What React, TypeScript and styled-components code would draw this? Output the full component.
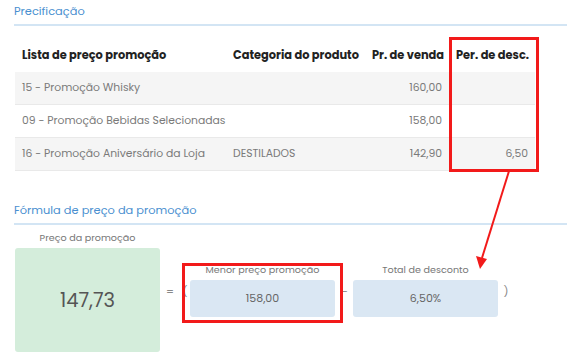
import styled, { createGlobalStyle } from 'styled-components'

const GlobalStyle = createGlobalStyle`
  html, body {
    margin: 0;
    padding: 0;
    background: #fff;
  }
  body {
    font-family: 'Poppins', 'Open Sans', 'Liberation Sans', sans-serif;
  }
`

const Page = styled.div`
  position: relative;
  width: 567px;
  height: 364px;
  overflow: hidden;
  padding-left: 14px;
  box-sizing: border-box;
`

const SectionTitle = styled.div<{ $top: number }>`
  margin-top: ${(p) => p.$top}px;
  font-size: 11.4px;
  line-height: 18px;
  color: #4a8fd0;
  padding-bottom: 4px;
  border-bottom: 2px solid #d3e5f4;
`

const Table = styled.div`
  margin-top: 12px;
  margin-left: 1px;
  width: 520px;
`

const Row = styled.div<{ $striped?: boolean; $head?: boolean }>`
  display: grid;
  grid-template-columns: 211px 139px 84px 86px;
  height: ${(p) => (p.$head ? 34 : 32)}px;
  align-items: center;
  background: ${(p) => (p.$striped ? '#f5f5f5' : '#fff')};
  border-bottom: ${(p) => (p.$head ? 'none' : '1px solid #e9e9e9')};
  font-size: ${(p) => (p.$head ? '11.4px' : '10.8px')};
  font-weight: ${(p) => (p.$head ? 700 : 400)};
  color: ${(p) => (p.$head ? '#222' : '#7a7a7a')};
`

const Cell = styled.div<{ $right?: boolean }>`
  padding: 0 7px;
  text-align: ${(p) => (p.$right ? 'right' : 'left')};
  white-space: nowrap;
`

const Formula = styled.div`
  display: flex;
  align-items: flex-start;
  margin-top: 6px;
  margin-left: 1px;
`

const Block = styled.div`
  display: flex;
  flex-direction: column;
  align-items: center;
`

const Label = styled.div`
  font-size: 9.6px;
  line-height: 14px;
  color: #777;
  margin-bottom: 3px;
`

const ResultBox = styled.div`
  width: 145px;
  height: 104px;
  background: #d4eddb;
  border-radius: 3px;
  display: flex;
  align-items: center;
  justify-content: center;
  font-size: 19.5px;
  color: #555;
`

const Operator = styled.div<{ $w: number }>`
  width: ${(p) => p.$w}px;
  margin-top: 53px;
  font-size: 11px;
  color: #888;
  text-align: center;
  line-height: 14px;
`

const TermGroup = styled.div`
  display: flex;
  flex-direction: column;
  align-items: center;
  margin-top: 32px;
`

const TermBox = styled.div`
  width: 145px;
  height: 37px;
  background: #dae7f3;
  border-radius: 3px;
  display: flex;
  align-items: center;
  justify-content: center;
  font-size: 11px;
  color: #666;
`

const Highlight = styled.div<{ $x: number; $y: number; $w: number; $h: number }>`
  position: absolute;
  left: ${(p) => p.$x}px;
  top: ${(p) => p.$y}px;
  width: ${(p) => p.$w}px;
  height: ${(p) => p.$h}px;
  border: 3px solid #f21a1a;
  box-sizing: border-box;
  pointer-events: none;
`

const Arrow = styled.svg`
  position: absolute;
  left: 0;
  top: 0;
  pointer-events: none;
`

const rows = [
  { name: '15 - Promoção Whisky', cat: '', price: '160,00', disc: '' },
  { name: '09 - Promoção Bebidas Selecionadas', cat: '', price: '158,00', disc: '' },
  { name: '16 - Promoção Aniversário da Loja', cat: 'DESTILADOS', price: '142,90', disc: '6,50' },
]

export default function App() {
  return (
    <>
      <GlobalStyle />
      <Page>
        <SectionTitle $top={2}>Precificação</SectionTitle>
        <Table>
          <Row $head>
            <Cell>Lista de preço promoção</Cell>
            <Cell>Categoria do produto</Cell>
            <Cell $right>Pr. de venda</Cell>
            <Cell>Per. de desc.</Cell>
          </Row>
          {rows.map((r, i) => (
            <Row key={i} $striped={i % 2 === 0}>
              <Cell>{r.name}</Cell>
              <Cell>{r.cat}</Cell>
              <Cell $right>{r.price}</Cell>
              <Cell $right>{r.disc}</Cell>
            </Row>
          ))}
        </Table>
        <SectionTitle $top={30}>Fórmula de preço da promoção</SectionTitle>
        <Formula>
          <Block>
            <Label>Preço da promoção</Label>
            <ResultBox>147,73</ResultBox>
          </Block>
          <Operator $w={20}>=</Operator>
          <Operator $w={10}>(</Operator>
          <TermGroup>
            <Label>Menor preço promoção</Label>
            <TermBox>158,00</TermBox>
          </TermGroup>
          <Operator $w={18}>–</Operator>
          <TermGroup>
            <Label>Total de desconto</Label>
            <TermBox>6,50%</TermBox>
          </TermGroup>
          <Operator $w={16}>)</Operator>
        </Formula>

        <Highlight $x={449} $y={37} $w={90} $h={135} />
        <Highlight $x={182} $y={263} $w={161} $h={60} />
        <Arrow width={567} height={364} viewBox="0 0 567 364">
          <line x1={509} y1={171} x2={482} y2={258} stroke="#f21a1a" strokeWidth={2} />
          <polygon points="480,269 476,256 487,259" fill="#f21a1a" />
        </Arrow>
      </Page>
    </>
  )
}
